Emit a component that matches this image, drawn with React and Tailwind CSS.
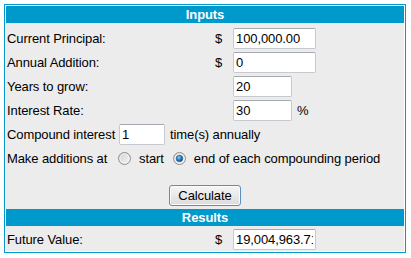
import React from "react";

function Radio({ checked }) {
  return (
    <svg width="13" height="13" viewBox="0 0 13 13" className="shrink-0">
      <defs>
        <linearGradient id={checked ? "rg1" : "rg0"} x1="0" y1="0" x2="1" y2="1">
          <stop offset="0" stopColor="#d0d0d0" />
          <stop offset="1" stopColor="#f7f7f7" />
        </linearGradient>
        <radialGradient id="dot" cx="0.4" cy="0.35" r="0.7">
          <stop offset="0" stopColor="#8ad0f5" />
          <stop offset="0.5" stopColor="#2a7fc0" />
          <stop offset="1" stopColor="#12467a" />
        </radialGradient>
      </defs>
      <circle cx="6.5" cy="6.5" r="6" fill={`url(#${checked ? "rg1" : "rg0"})`} stroke="#8e8f8f" strokeWidth="1" />
      <circle cx="6.5" cy="6.5" r="4.5" fill="none" stroke="#f4f4f4" strokeWidth="0.8" />
      {checked && <circle cx="6.5" cy="6.5" r="3.3" fill="url(#dot)" stroke="#1f4f80" strokeWidth="0.5" />}
    </svg>
  );
}

function Box({ value, w }) {
  return (
    <input
      readOnly
      value={value}
      className={`${w} h-[21px] border border-[#c6c9cf] border-t-[#a5a8ae] rounded-[2px] bg-white px-[2px] text-[13px] text-black outline-none tracking-[-0.1px]`}
    />
  );
}

export default function App() {
  return (
    <div className="pt-[4px] pl-[4px] font-['Liberation_Sans',Arial,sans-serif] text-[13px] text-black leading-none tracking-[-0.1px]">
      <div className="w-[402px] border border-[#0099cc] bg-white p-[1px]">
        <div className="h-[17px] bg-[#0099cc] text-white font-bold flex items-center justify-center">Inputs</div>
        <div className="bg-[#ececec] pt-[3px] pb-[3px]">
          <div className="h-[24px] flex items-center pl-[1px]">
            <span className="w-[208px]">Current Principal:</span>
            <span className="w-[18px]">$</span>
            <Box value="100,000.00" w="w-[83px]" />
          </div>
          <div className="h-[24px] flex items-center pl-[1px]">
            <span className="w-[208px]">Annual Addition:</span>
            <span className="w-[18px]">$</span>
            <Box value="0" w="w-[83px]" />
          </div>
          <div className="h-[24px] flex items-center pl-[1px]">
            <span className="w-[226px]">Years to grow:</span>
            <Box value="20" w="w-[59px]" />
          </div>
          <div className="h-[24px] flex items-center pl-[1px]">
            <span className="w-[226px]">Interest Rate:</span>
            <Box value="30" w="w-[59px]" />
            <span className="ml-[5px]">%</span>
          </div>
          <div className="h-[24px] flex items-center pl-[1px]">
            <span className="w-[112px]">Compound interest</span>
            <Box value="1" w="w-[46px]" />
            <span className="ml-[5px]">time(s) annually</span>
          </div>
          <div className="h-[24px] flex items-center pl-[1px]">
            <span className="w-[111px]">Make additions at</span>
            <Radio checked={false} />
            <span className="ml-[8px]">start</span>
            <span className="ml-[9px]"><Radio checked={true} /></span>
            <span className="ml-[8px]">end of each compounding period</span>
          </div>
          <div className="flex justify-center mt-[15px]">
            <button className="w-[72px] h-[21px] border border-[#5b8fbf] rounded-[3px] bg-linear-to-b from-[#f6f6f6] to-[#dcdcdc] shadow-[inset_0_0_0_1px_#fbfbfb] text-[13px] text-black flex items-center justify-center">
              Calculate
            </button>
          </div>
        </div>
        <div className="h-[17px] bg-[#0099cc] text-white font-bold flex items-center justify-center">Results</div>
        <div className="bg-[#ececec] h-[25px] pt-[3px] pb-[1px] flex items-center pl-[1px]">
          <span className="w-[208px]">Future Value:</span>
          <span className="w-[18px]">$</span>
          <Box value="19,004,963.71" w="w-[83px]" />
        </div>
      </div>
    </div>
  );
}
